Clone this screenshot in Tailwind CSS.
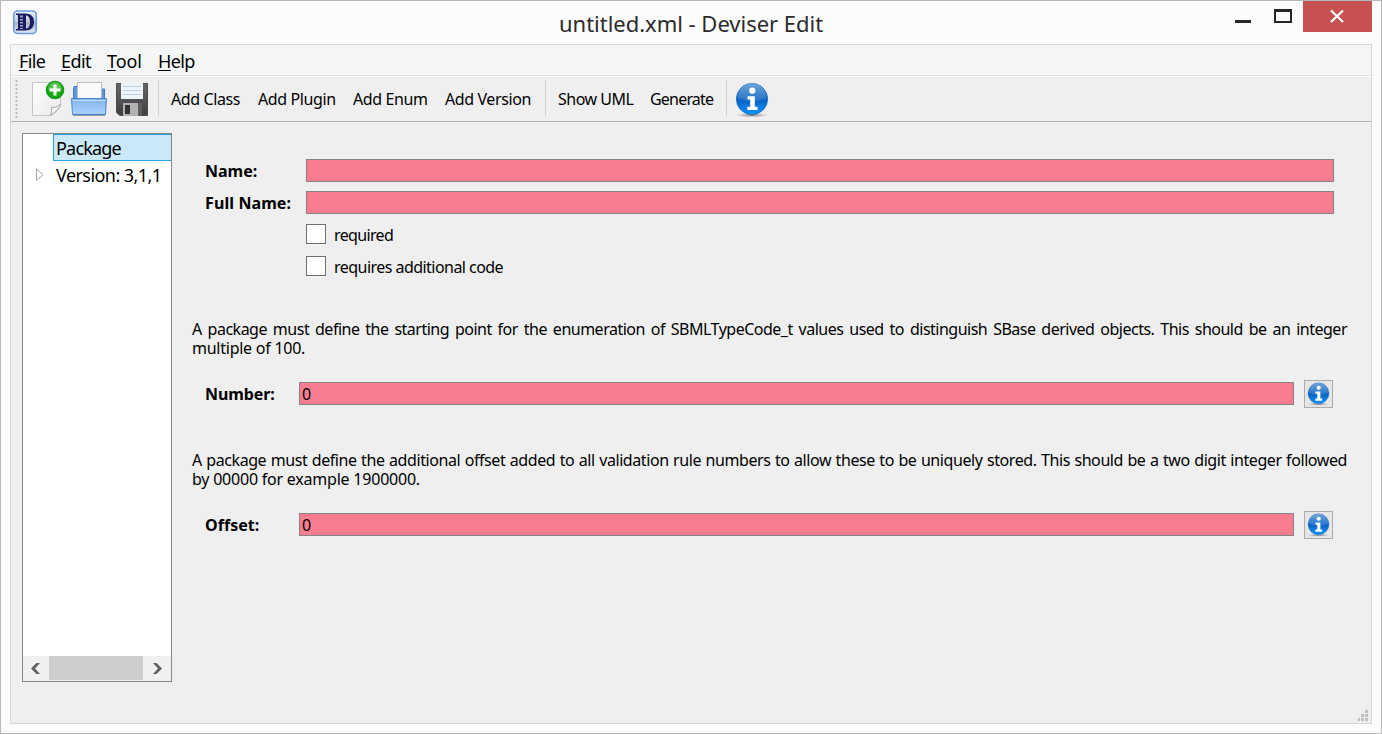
<!DOCTYPE html>
<html lang="en">
<head>
<meta charset="utf-8">
<title>untitled.xml - Deviser Edit</title>
<script src="https://cdn.jsdelivr.net/npm/@tailwindcss/browser@4"></script>
</head>
<body class="overflow-hidden">
<svg class="absolute size-0">
  <defs>
    <linearGradient id="blue" x1="0" y1="0" x2="0" y2="1"><stop offset="0" stop-color="#1b62b4"/><stop offset=".5" stop-color="#0a60bd"/><stop offset="1" stop-color="#0a93ff"/></linearGradient>
    <linearGradient id="gloss" x1="0" y1="0" x2="0" y2="1"><stop offset="0" stop-color="#8dbbe8" stop-opacity=".75"/><stop offset="1" stop-color="#5a9de0" stop-opacity=".35"/></linearGradient>
    <radialGradient id="shade"><stop offset="0" stop-color="#777"/><stop offset="1" stop-color="#999" stop-opacity="0"/></radialGradient>
    <linearGradient id="paper" x1="0" y1="0" x2="1" y2="1"><stop offset="0" stop-color="#fff"/><stop offset="1" stop-color="#e9e9e9"/></linearGradient>
    <radialGradient id="green" cx=".5" cy=".5" r=".55"><stop offset="0" stop-color="#22c414"/><stop offset="1" stop-color="#0f970c"/></radialGradient>
    <linearGradient id="tray" x1="0" y1="0" x2="0" y2="1"><stop offset="0" stop-color="#7fb0ea"/><stop offset=".3" stop-color="#8fbdf2"/><stop offset="1" stop-color="#a9d2ff"/></linearGradient>
    <linearGradient id="disk" x1="0" y1="0" x2="0" y2="1"><stop offset="0" stop-color="#66666a"/><stop offset="1" stop-color="#3f3f42"/></linearGradient>
    <linearGradient id="app" x1="0" y1="0" x2="0" y2="1"><stop offset="0" stop-color="#eef2f7"/><stop offset=".48" stop-color="#c4cad3"/><stop offset=".52" stop-color="#aab2be"/><stop offset="1" stop-color="#dfeaf8"/></linearGradient>
    <symbol id="info" viewBox="0 0 34 36">
      <ellipse cx="17" cy="33.200" rx="16.500" ry="2.300" fill="url(#shade)"/>
      <circle cx="17" cy="17" r="15.700" fill="url(#blue)" stroke="#1560b8" stroke-width=".6"/>
      <path d="M2.300 16a14.700 14.700 0 0 1 29.400 0q-14 6-29.400 0z" fill="url(#gloss)"/>
      <circle cx="17.300" cy="8.700" r="3.100" fill="#fff"/>
      <path d="M12.500 14.300h7.300v10.500h2.700v3.200H12.300v-3.200h2.900v-7.300h-2.700z" fill="#fff"/>
    </symbol>
  </defs>
</svg>

<div class="flex h-[734px] w-[1382px] flex-col border border-[#b9b9b9] bg-[#fcfcfc] px-[9px] pb-[9px] font-['Noto_Sans','Open_Sans',sans-serif] text-black">
  <!-- title bar -->
  <header class="relative flex h-[43px] shrink-0 items-start">
    <svg class="mt-[9px] ml-[2px]" width="26" height="25" viewBox="0 0 26 25">
      <rect x="1.700" y="1" width="22.600" height="22.500" rx="4" fill="url(#app)" stroke="#6a9ade" stroke-width="1.600"/>
      <path d="M4 3.500h9c6.500 0 9 3.500 9 8.500s-3 8.500-9 8.500H4V19h2V5H4zM14 5.500v13c2.500 0 4-2.500 4-6.500s-1.500-6.500-4-6.500z" fill="#1b1b63" fill-rule="evenodd"/>
      <path d="M8 5.500h3v2H8zm0 3.500h3v1.500H8zm0 3h3v1.500H8zm0 3h3v1.500H8zm0 3h3v1H8z" fill="#9aa2bd"/>
    </svg>
    <div class="absolute top-[6px] left-[549px] text-[22px] leading-8 tracking-[-0.02px] whitespace-nowrap text-[#2b2b2b]">untitled.xml - Deviser Edit</div>
    <div class="ml-auto flex">
      <svg width="84" height="31" viewBox="0 0 84 31"><path d="M0 19h16v3H0z" fill="#262626"/><path d="M39 8h18v14H39zm2 3v9h14v-9z" fill="#262626" fill-rule="evenodd"/></svg>
      <div class="-ml-4 flex h-[31px] w-[69px] justify-center bg-[#c75050]"><svg class="mt-[9px] mr-[2px]" width="14" height="13" viewBox="0 0 14 13"><path d="M1 .5l12 11.500M13 .5L1 12" stroke="#fff" stroke-width="2.200"/></svg></div>
    </div>
  </header>

  <div class="flex min-h-0 flex-1 flex-col border border-[#d5d5d5] bg-[#efefef]">
    <!-- menu bar -->
    <nav class="flex h-[31px] shrink-0 border-b border-[#e2e2e3] bg-[#f4f6f8] pl-2 text-[18px] leading-[33px] tracking-[-0.6px] whitespace-nowrap">
      <div class="w-[42px]"><u class="underline-offset-2">F</u>ile</div>
      <div class="w-[46px]"><u class="underline-offset-2">E</u>dit</div>
      <div class="w-[51px] tracking-[-0.1px]"><u class="underline-offset-2">T</u>ool</div>
      <div><u class="underline-offset-2">H</u>elp</div>
    </nav>
    <!-- toolbar -->
    <div class="flex h-[46px] shrink-0 items-start border-t border-b border-t-white border-b-[#b2b2b2] text-[16px] leading-[44px] tracking-[-0.4px] whitespace-nowrap">
      <svg class="mt-[3px] ml-1" width="3" height="39"><path d="M1.500 0v39" stroke="#bcbcbc" stroke-width="2" stroke-dasharray="2 2"/></svg>
      <svg class="mt-[2px] ml-[12px]" width="36" height="40" viewBox="0 0 36 40">
        <path d="M2.500 3.500h28V26q-1 5-9.500 10.500H2.500z" fill="url(#paper)" stroke="#c4c4c4"/>
        <path d="M20.500 36q2-4 1-8 4 2 9-3-1 6-10 11z" fill="#f9f9f9" stroke="#a9a9a9"/>
        <circle cx="25" cy="11" r="8.800" fill="url(#green)" stroke="#0f9b10"/>
        <path d="M18 10a7 7 0 0 1 14 0q-7 3-14 0z" fill="#fff" fill-opacity=".28"/>
        <path d="M23.500 5.500h3v4h4v3h-4v4h-3v-4h-4v-3h4z" fill="#fff"/>
      </svg>
      <svg class="mt-[2px] ml-[4px]" width="38" height="40" viewBox="0 0 38 40">
        <path d="M3.500 20V8.500q0-1 1-1H12l2 2.500h20.500V21z" fill="#5c9ae0" stroke="#3d7dcc"/>
        <path d="M7.500 3.500h24V22h-24z" fill="#fafafa" stroke="#bdbdbd"/>
        <path d="M1.500 19.500h35l-1 16h-33z" fill="url(#tray)" stroke="#4686d6"/>
        <path d="M2.500 21.500h33" stroke="#c3dcf8"/>
        <path d="M3 36.500h32" stroke="#999"/>
      </svg>
      <svg class="mt-[2px] ml-[6px]" width="34" height="40" viewBox="0 0 34 40">
        <path d="M2.500 4.500h31v32H6l-3.500-3z" fill="url(#disk)" stroke="#4c4c4e"/>
        <path d="M7 4h22v16H7z" fill="#edf4fa"/>
        <path d="M9 7.500h18M9 11.500h18M9 15.500h18" stroke="#b8d2e6"/>
        <path d="M9 24h18v13H9z" fill="#b2b2b4"/><path d="M11 26h5v9h-5z" fill="#333"/>
        <path d="M24 24h4v13h-4z" fill="#5d5d60"/>
      </svg>
      <div class="mt-[3px] ml-[10px] h-9 w-px bg-[#cfcfcf]"></div>
      <div class="ml-[12px] w-[87px]">Add Class</div>
      <div class="w-[95px]">Add Plugin</div>
      <div class="w-[92px]">Add Enum</div>
      <div class="w-[100px]">Add Version</div>
      <div class="mt-[3px] h-9 w-px bg-[#cfcfcf]"></div>
      <div class="ml-[12px] w-[92px] tracking-[-0.5px]">Show UML</div>
      <div class="w-[76px] tracking-[-0.8px]">Generate</div>
      <div class="mt-[3px] h-9 w-px bg-[#cfcfcf]"></div>
      <svg class="mt-[5px] ml-[8px]" width="34" height="36"><use href="#info"/></svg>
    </div>

    <div class="flex min-h-0 flex-1">
      <!-- tree -->
      <aside class="mt-[11px] ml-[11px] flex h-[549px] w-[150px] shrink-0 flex-col border border-[#828790] bg-white text-[18px] leading-[27px] whitespace-nowrap">
        <div class="ml-[30px] h-[27px] border border-r-0 border-[#2ba0da] bg-[#cbe8f6] pl-[2px] tracking-[-0.8px]">Package</div>
        <div class="flex h-[27px] pl-[13px]">
          <svg class="mt-[7px] mr-[12px]" width="8" height="14" viewBox="0 0 8 14"><path d="M.5 1v11.500L7 6.700z" fill="#fff" stroke="#a6a6a6"/></svg>
          <span class="pt-px tracking-[-0.56px]">Version: 3,1,1</span>
        </div>
        <div class="mt-auto flex h-[25px] bg-[#f0f0f0]">
          <svg width="26" height="24" viewBox="0 0 26 24"><path d="M8 12.500L13.500 7H17l-5 5.500 5 5.500h-3.500z" fill="#606060"/></svg>
          <div class="h-6 w-[94px] bg-[#cdcdcd]"></div>
          <svg width="28" height="24" viewBox="0 0 28 24"><path d="M19 12.500L13.500 7H10l5 5.500-5 5.500h3.500z" fill="#606060"/></svg>
        </div>
      </aside>

      <!-- package form -->
      <main class="ml-5 flex w-[1155px] flex-col pt-[37px] text-[16px] leading-[19px] tracking-[-0.45px]">
        <label class="flex h-[23px] items-center pl-[13px]"><b class="w-[101px] pt-[2px] tracking-[0px]">Name:</b><span class="h-[23px] w-[1028px] border border-[#848484] bg-[#f87c8f]"></span></label>
        <label class="mt-[9px] flex h-[23px] items-center pl-[13px]"><b class="w-[101px] pt-[2px] tracking-[0.1px]">Full Name:</b><span class="h-[23px] w-[1028px] border border-[#848484] bg-[#f87c8f]"></span></label>
        <label class="mt-[10px] flex h-5 items-center pl-[114px]"><span class="mr-2 size-5 border border-[#707070] bg-white"></span><span class="pt-[2px] tracking-[-0.65px]">required</span></label>
        <label class="mt-3 flex h-5 items-center pl-[114px]"><span class="mr-2 size-5 border border-[#707070] bg-white"></span><span class="pt-[2px] tracking-[-0.54px]">requires additional code</span></label>

        <p class="mt-[44px] whitespace-nowrap">
          <span class="block text-justify tracking-[-0.5px] [text-align-last:justify] whitespace-normal">A package must define the starting point for the enumeration of SBMLTypeCode_t values used to distinguish SBase derived objects. This should be an integer</span>
          <span class="block tracking-[-0.25px]">multiple of 100.</span>
        </p>
        <div class="mt-[22px] flex h-[28px] items-center pl-[13px]"><b class="w-[94px] tracking-[-0.1px]">Number:</b><span class="mb-px flex h-[23px] w-[995px] items-center border border-[#848484] bg-[#f87c8f] pt-px pl-[2px]">0</span>
          <button class="ml-[10px] flex h-[28px] w-[29px] items-center justify-center border border-[#adadad] bg-[#e6e6e6]"><svg class="mr-px" width="23" height="24"><use href="#info"/></svg></button></div>

        <p class="mt-[43px] whitespace-nowrap">
          <span class="block text-justify tracking-[-0.42px] [text-align-last:justify] whitespace-normal">A package must define the additional offset added to all validation rule numbers to allow these to be uniquely stored. This should be a two digit integer followed</span>
          <span class="block tracking-[-0.22px]">by 00000 for example 1900000.</span>
        </p>
        <div class="mt-[22px] flex h-[28px] items-center pl-[13px]"><b class="w-[94px] tracking-[0.05px]">Offset:</b><span class="mb-px flex h-[23px] w-[995px] items-center border border-[#848484] bg-[#f87c8f] pt-px pl-[2px]">0</span>
          <button class="ml-[10px] flex h-[28px] w-[29px] items-center justify-center border border-[#adadad] bg-[#e6e6e6]"><svg class="mr-px" width="23" height="24"><use href="#info"/></svg></button></div>
      </main>
    </div>
    <!-- size grip -->
    <svg class="mr-[3px] mb-[2px] ml-auto" width="10" height="11" viewBox="0 0 10 11"><path d="M7 0h3v3H7zM3 4h3v3H3zM7 4h3v3H7zM0 8h2v3H0zM3 8h3v3H3zM7 8h3v3H7z" fill="#bfbfbf"/></svg>
  </div>
</div>
</body>
</html>
